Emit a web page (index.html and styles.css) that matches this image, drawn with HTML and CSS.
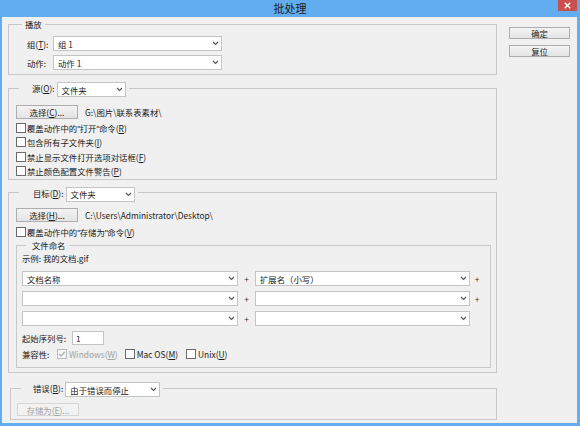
FILE: index.html
```html
<!DOCTYPE html>
<html>
<head>
<meta charset="utf-8">
<title>批处理</title>
<link rel="stylesheet" href="styles.css">
</head>
<body>
<div class="window">
  <div class="titlebar">
    <span class="title">批处理</span>
    <span class="close"><svg width="7" height="7" viewBox="0 0 7 7"><path d="M0.8 0.8L6.2 6.2M6.2 0.8L0.8 6.2" stroke="#fff" stroke-width="1.3" fill="none"/></svg></span>
  </div>
  <div class="client">
    <div class="main">
      <fieldset class="grp">
        <legend class="lg lg-play">播放</legend>
        <div class="gb gb-play">
          <div class="frow">
            <span class="flabel">组(<u>T</u>):</span>
            <div class="sel w169"><span>组 1</span><svg class="chev" width="7" height="5" viewBox="0 0 7 5"><path d="M1 1l2.5 2.5L6 1" fill="none" stroke="#555" stroke-width="1.1"/></svg></div>
          </div>
          <div class="frow frow2">
            <span class="flabel">动作:</span>
            <div class="sel w169"><span>动作 1</span><svg class="chev" width="7" height="5" viewBox="0 0 7 5"><path d="M1 1l2.5 2.5L6 1" fill="none" stroke="#555" stroke-width="1.1"/></svg></div>
          </div>
        </div>
      </fieldset>

      <fieldset class="grp g-src">
        <legend class="lg lg-ctl lg-src">
          <span class="llabel">源(<u>O</u>):</span>
          <div class="sel w69"><span>文件夹</span><svg class="chev" width="7" height="5" viewBox="0 0 7 5"><path d="M1 1l2.5 2.5L6 1" fill="none" stroke="#555" stroke-width="1.1"/></svg></div>
        </legend>
        <div class="gb gb-src">
          <div class="brow">
            <button class="btn">选择(<u>C</u>)...</button>
            <span class="path">G:\图片\联系表素材\</span>
          </div>
          <div class="chk chk-first"><span class="box"></span><span>覆盖动作中的<span class="q">"</span>打开<span class="q">"</span>命令(<u>R</u>)</span></div>
          <div class="chk"><span class="box"></span><span>包含所有子文件夹(<u>I</u>)</span></div>
          <div class="chk"><span class="box"></span><span>禁止显示文件打开选项对话框(<u>F</u>)</span></div>
          <div class="chk"><span class="box"></span><span>禁止颜色配置文件警告(<u>P</u>)</span></div>
        </div>
      </fieldset>

      <fieldset class="grp g-dst">
        <legend class="lg lg-ctl lg-dst">
          <span class="llabel">目标(<u>D</u>):</span>
          <div class="sel w69"><span>文件夹</span><svg class="chev" width="7" height="5" viewBox="0 0 7 5"><path d="M1 1l2.5 2.5L6 1" fill="none" stroke="#555" stroke-width="1.1"/></svg></div>
        </legend>
        <div class="gb gb-dst">
          <div class="brow">
            <button class="btn">选择(<u>H</u>)...</button>
            <span class="path">C:\Users\Administrator\Desktop\</span>
          </div>
          <div class="chk chk-dst"><span class="box"></span><span>覆盖动作中的<span class="q">"</span>存储为<span class="q">"</span>命令(<u>V</u>)</span></div>

          <fieldset class="grp sub">
            <legend class="lg lg-sub">文件命名</legend>
            <div class="gb gb-sub">
              <div class="example">示例: 我的文档.gif</div>
              <div class="names">
                <div class="sel"><span>文档名称</span><svg class="chev" width="7" height="5" viewBox="0 0 7 5"><path d="M1 1l2.5 2.5L6 1" fill="none" stroke="#555" stroke-width="1.1"/></svg></div>
                <span class="plus">+</span>
                <div class="sel"><span>扩展名（小写）</span><svg class="chev" width="7" height="5" viewBox="0 0 7 5"><path d="M1 1l2.5 2.5L6 1" fill="none" stroke="#555" stroke-width="1.1"/></svg></div>
                <span class="plus">+</span>

                <div class="sel"><span></span><svg class="chev" width="7" height="5" viewBox="0 0 7 5"><path d="M1 1l2.5 2.5L6 1" fill="none" stroke="#555" stroke-width="1.1"/></svg></div>
                <span class="plus">+</span>
                <div class="sel"><span></span><svg class="chev" width="7" height="5" viewBox="0 0 7 5"><path d="M1 1l2.5 2.5L6 1" fill="none" stroke="#555" stroke-width="1.1"/></svg></div>
                <span class="plus">+</span>

                <div class="sel"><span></span><svg class="chev" width="7" height="5" viewBox="0 0 7 5"><path d="M1 1l2.5 2.5L6 1" fill="none" stroke="#555" stroke-width="1.1"/></svg></div>
                <span class="plus">+</span>
                <div class="sel"><span></span><svg class="chev" width="7" height="5" viewBox="0 0 7 5"><path d="M1 1l2.5 2.5L6 1" fill="none" stroke="#555" stroke-width="1.1"/></svg></div>
                <span class="plus"></span>
              </div>
              <div class="seqrow">
                <span class="seqlabel">起始序列号:</span>
                <div class="input">1</div>
              </div>
              <div class="compat">
                <span class="clabel">兼容性:</span>
                <span class="citem disabled"><span class="box box-dis"><svg width="8" height="8" viewBox="0 0 8 8"><path d="M1.3 4.2L3.2 6L6.8 1.8" fill="none" stroke="#a9a9a9" stroke-width="1.2"/></svg></span>Windows(<u>W</u>)</span>
                <span class="citem c-mac"><span class="box"></span>Mac OS(<u>M</u>)</span>
                <span class="citem c-unix"><span class="box"></span>Unix(<u>U</u>)</span>
              </div>
            </div>
          </fieldset>
        </div>
      </fieldset>

      <fieldset class="grp g-err">
        <legend class="lg lg-ctl lg-err">
          <span class="llabel">错误(<u>B</u>):</span>
          <div class="sel w95"><span>由于错误而停止</span><svg class="chev" width="7" height="5" viewBox="0 0 7 5"><path d="M1 1l2.5 2.5L6 1" fill="none" stroke="#555" stroke-width="1.1"/></svg></div>
        </legend>
        <div class="gb gb-err">
          <button class="btn btn-dis">存储为(<u>E</u>)...</button>
        </div>
      </fieldset>
    </div>
    <div class="side">
      <button class="btn sbtn">确定</button>
      <button class="btn sbtn">复位</button>
    </div>
  </div>
</div>
</body>
</html>
```

FILE: styles.css
```css
* { box-sizing: border-box; }

body {
  margin: 0;
  width: 580px;
  height: 426px;
  overflow: hidden;
  background: #f0f0f0;
  font-family: "Noto Sans CJK SC", sans-serif;
  font-size: 8.4px;
  line-height: 12px;
  color: #1b1b1b;
}

u { text-decoration: underline; text-underline-offset: 1px; }

.q {
  font-family: "Liberation Sans", sans-serif;
  letter-spacing: -0.5px;
}

.window {
  width: 580px;
  height: 426px;
  display: flex;
  flex-direction: column;
  background: #62adf0;
}

.titlebar {
  height: 17px;
  position: relative;
  display: flex;
  justify-content: center;
  align-items: center;
}

.title {
  font-size: 11px;
  line-height: 17px;
  color: #1c1c1c;
}

.close {
  position: absolute;
  right: 3px;
  top: 0;
  width: 19px;
  height: 11px;
  background: #c9504f;
  display: flex;
  align-items: center;
  justify-content: center;
}

.client {
  flex: 1;
  margin: 0 3px 3px 2px;
  background: #f0f0f0;
  display: flex;
  padding: 1px 0 0 6px;
}

.main {
  width: 489px;
  display: flex;
  flex-direction: column;
}

.side {
  margin-left: 12px;
  width: 61px;
  display: flex;
  flex-direction: column;
  padding-top: 9px;
  gap: 6px;
}

/* group boxes */
.grp {
  margin: 0;
  padding: 0;
  min-width: 0;
  border: 1px solid #c8c8c8;
}

.lg {
  height: 12px;
  line-height: 12px;
  padding: 0 3px;
}

.lg-ctl {
  display: flex;
  align-items: flex-start;
}

.lg-ctl .sel {
  margin-bottom: -3px;
  margin-left: 2px;
}

.lg-play { margin-left: 13px; }
.lg-src { margin-left: 10px; padding-left: 13px; }
.lg-dst { margin-left: 10px; padding-left: 14px; }
.lg-err { margin-left: 10px; padding-left: 12px; }
.lg-sub { margin-left: 9px; padding-left: 6px; }

.gb-play { padding: 6px 0 4px 18px; }
.gb-src { padding: 11px 0 0.8px 7px; }
.gb-dst { padding: 9px 5px 4px 7px; }
.gb-sub { padding: 1px 0 7px 5px; }
.gb-err { padding: 9px 0 3px 6px; }

.g-src { margin-top: 7px; }
.g-dst { margin-top: 7px; }
.g-err { margin-top: 9px; margin-left: 2px; }

/* rows */
.frow {
  display: flex;
  align-items: center;
  height: 15px;
}

.frow2 { margin-top: 4px; }

.flabel {
  width: 24px;
  margin-right: 2px;
  white-space: nowrap;
}

.llabel { white-space: nowrap; }

/* combo boxes */
.sel {
  height: 15px;
  background: #fff;
  border: 1px solid #c4c4c4;
  display: flex;
  align-items: center;
  justify-content: space-between;
  padding: 0 2px 0 4px;
  white-space: nowrap;
}

.w169 { width: 169px; }
.w69 { width: 69px; }
.w95 { width: 95px; }

.chev { flex: none; }

/* buttons */
.btn {
  font-family: inherit;
  font-size: 8.4px;
  line-height: 12px;
  color: #1b1b1b;
  width: 62px;
  height: 14px;
  padding: 0;
  border: 1px solid #adadad;
  background: linear-gradient(#f3f3f3, #e4e4e4);
  text-align: center;
}

.sbtn {
  width: 61px;
  height: 12px;
  line-height: 10px;
}

.btn-dis {
  height: 13px;
  color: #a3a3a3;
  border-color: #d6d6d6;
  background: #f2f2f2;
}

.brow {
  display: flex;
  align-items: center;
  height: 14px;
}

.path {
  margin-left: 7px;
  white-space: nowrap;
}

/* checkboxes */
.chk {
  display: flex;
  align-items: center;
  height: 14.3px;
  white-space: nowrap;
}

.chk-first { margin-top: 2px; }
.chk-dst { margin-top: 3px; }

.box {
  width: 10px;
  height: 10px;
  flex: none;
  background: #fff;
  border: 1px solid #6b6b6b;
  margin-right: 1px;
  display: inline-flex;
  align-items: center;
  justify-content: center;
}

.box-dis {
  border-color: #bcbcbc;
  background: #f4f4f4;
}

/* naming sub group */
.example {
  height: 12px;
  white-space: nowrap;
}

.names {
  margin-top: 7px;
  display: grid;
  grid-template-columns: 216px 17px 215px 14px;
  grid-auto-rows: 15px;
  row-gap: 5px;
}

.plus {
  display: flex;
  align-items: center;
  justify-content: center;
  color: #333;
}

.seqrow {
  margin-top: 5px;
  height: 14px;
  display: flex;
  align-items: center;
}

.seqlabel {
  width: 50px;
  white-space: nowrap;
}

.input {
  width: 32px;
  height: 14px;
  background: #fff;
  border: 1px solid #c4c4c4;
  padding-left: 3px;
  line-height: 12px;
}

.compat {
  margin-top: 3px;
  height: 12px;
  display: flex;
  align-items: center;
  white-space: nowrap;
}

.clabel { width: 35px; }

.citem {
  display: flex;
  align-items: center;
}

.citem .box { margin-right: 2px; }

.disabled { color: #a3a3a3; }

.c-mac { margin-left: 7px; }
.c-unix { margin-left: 8px; }
```
